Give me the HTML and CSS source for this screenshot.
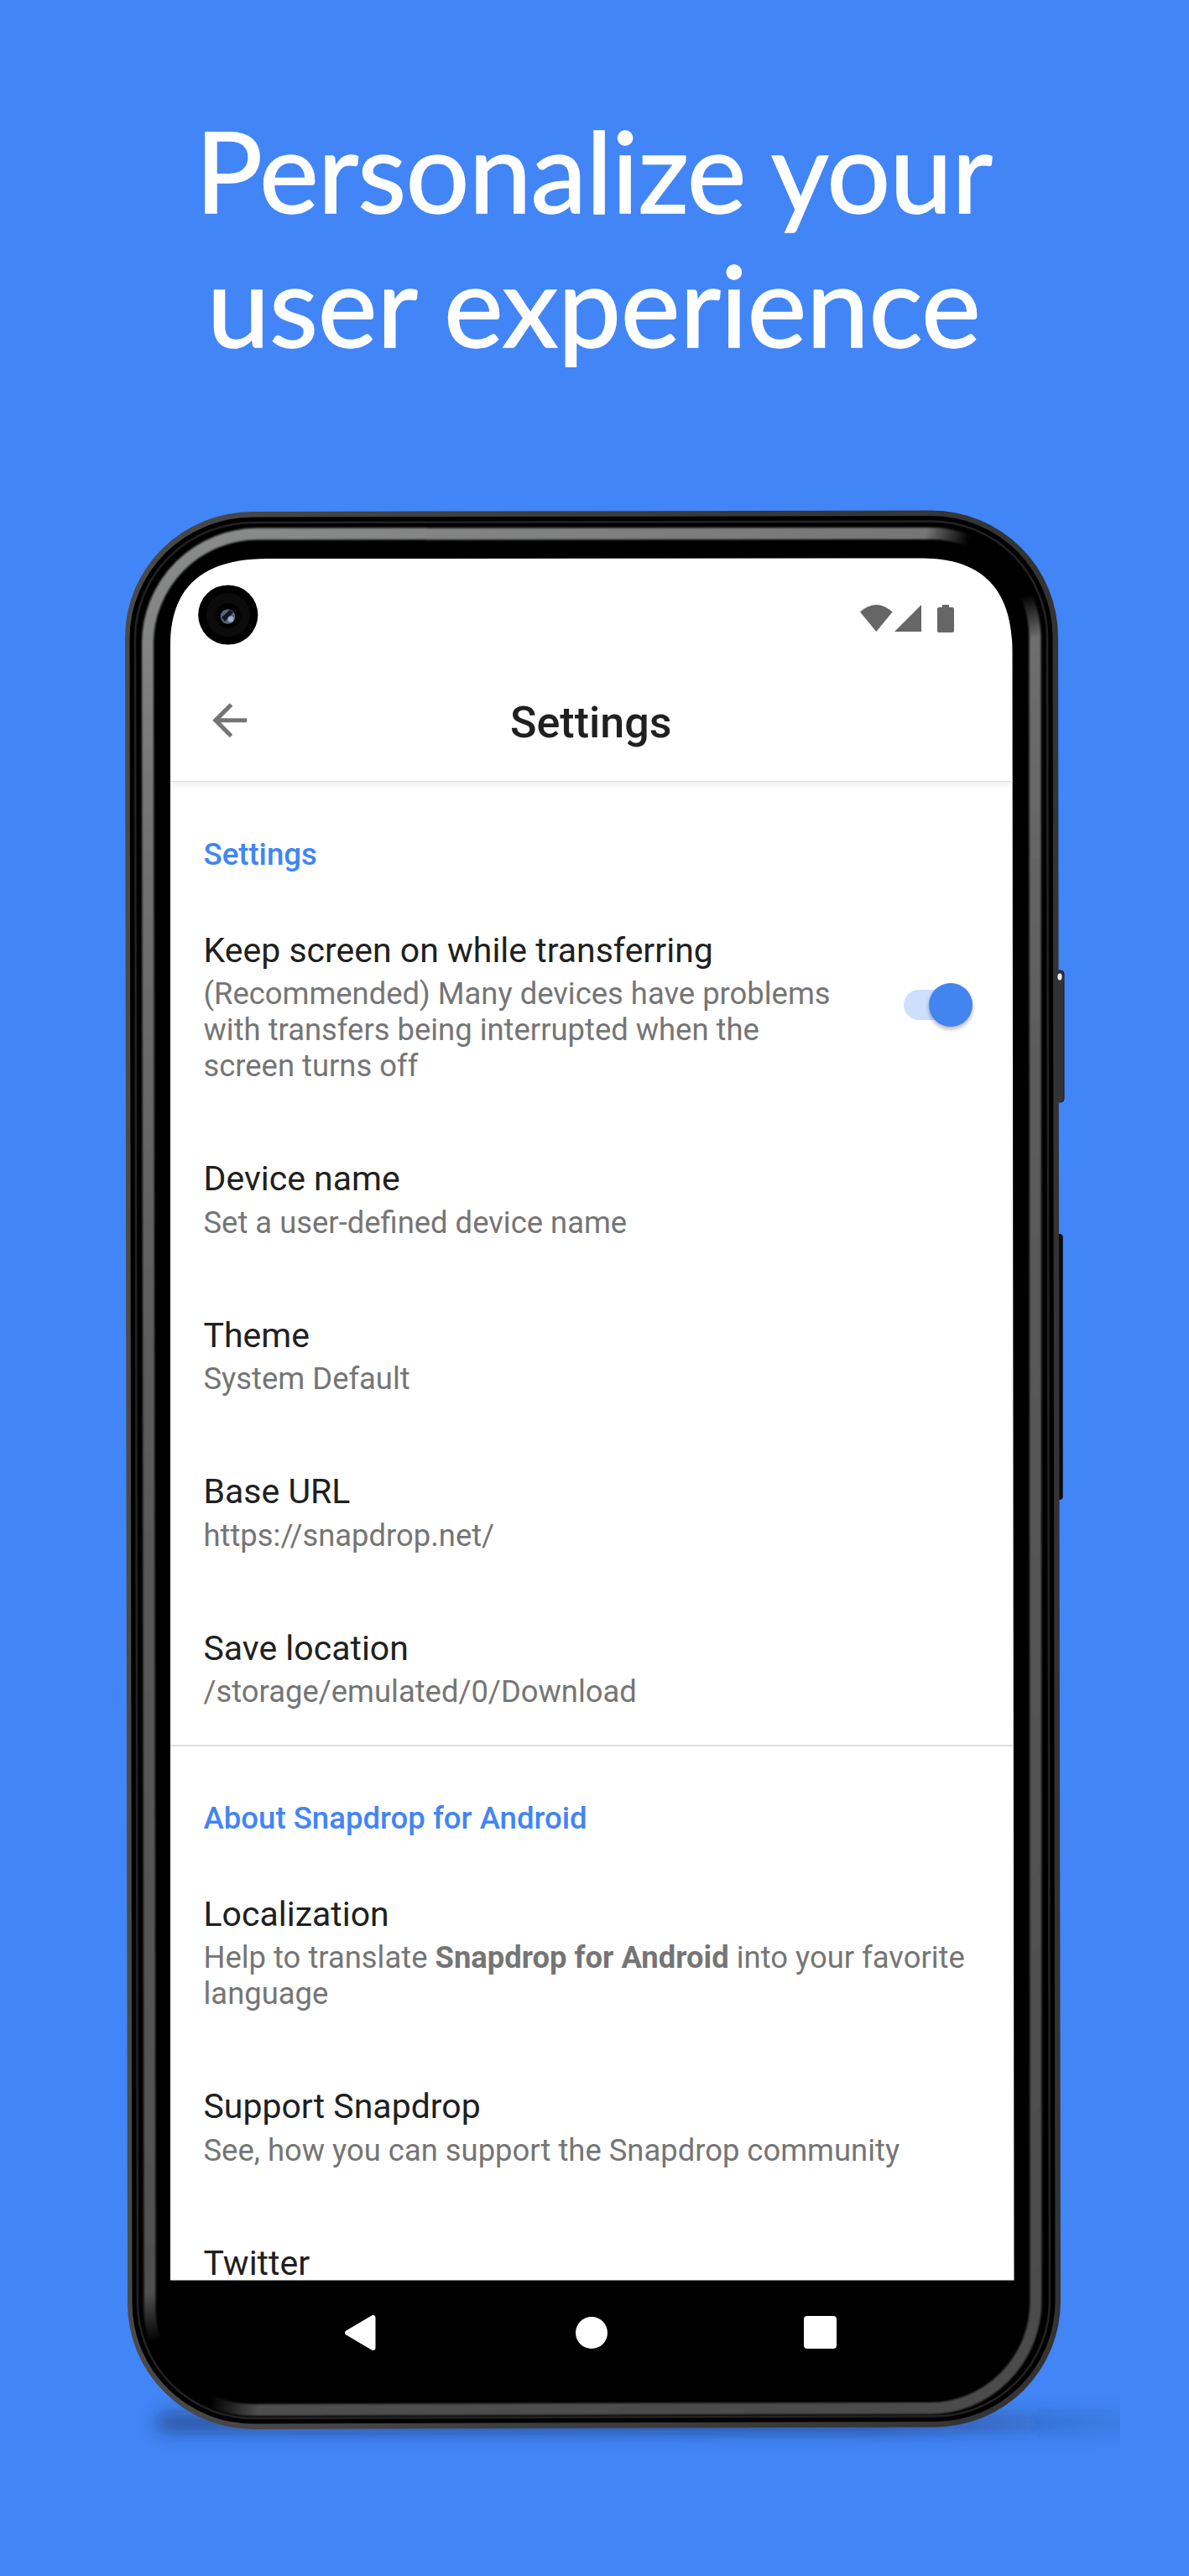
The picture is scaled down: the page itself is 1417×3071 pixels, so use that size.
FILE: index.html
```html
<!DOCTYPE html>
<html lang="en">
<head>
<meta charset="utf-8">
<title>Personalize your user experience</title>
<link rel="stylesheet" href="styles.css">
</head>
<body>
<main class="poster">
  <h1 class="headline"><span class="line-1">Personalize your</span><span class="line-2">user experience</span></h1>

  <svg class="device" width="1417" height="3071" viewBox="0 0 1417 3071" aria-hidden="true">
    <defs>
      <filter id="soft" x="-20%" y="-200%" width="140%" height="500%"><feGaussianBlur stdDeviation="10"/></filter>
      <filter id="edge" x="-5%" y="-5%" width="110%" height="110%"><feGaussianBlur stdDeviation="1"/></filter>
      <clipPath id="floor"><rect x="0" y="2800" width="1335" height="200"/></clipPath>
      <linearGradient id="shade" gradientUnits="userSpaceOnUse" x1="180" y1="0" x2="1400" y2="0">
        <stop offset="0" stop-color="#152a52" stop-opacity=".5"/>
        <stop offset=".7" stop-color="#152a52" stop-opacity=".6"/>
        <stop offset=".88" stop-color="#152a52" stop-opacity=".22"/>
        <stop offset="1" stop-color="#152a52" stop-opacity=".05"/>
      </linearGradient>
      <linearGradient id="rim" gradientUnits="userSpaceOnUse" x1="149" y1="0" x2="1264" y2="0">
        <stop offset="0" stop-color="#4a4a4a"/><stop offset=".5" stop-color="#3c3c3c"/><stop offset="1" stop-color="#333"/>
      </linearGradient>
      <linearGradient id="glow" gradientUnits="userSpaceOnUse" x1="149" y1="610" x2="900" y2="2890">
        <stop offset="0" stop-color="#8e908f"/><stop offset=".15" stop-color="#737373"/><stop offset=".4" stop-color="#5c5c5c"/><stop offset="1" stop-color="#4c4c4c"/>
      </linearGradient>
      <radialGradient id="fade">
        <stop offset="0" stop-color="#000"/><stop offset=".5" stop-color="#000"/><stop offset="1" stop-color="#000" stop-opacity="0"/>
      </radialGradient>
      <mask id="shine" maskUnits="userSpaceOnUse" x="0" y="0" width="1417" height="3071">
        <rect width="1417" height="3071" fill="#fff"/>
        <circle cx="1205" cy="660" r="105" fill="url(#fade)"/>
        <circle cx="195" cy="2848" r="115" fill="url(#fade)"/>
      </mask>
    </defs>
    <g clip-path="url(#floor)"><rect x="186" y="2876" width="1300" height="24" rx="12" fill="url(#shade)" filter="url(#soft)"/></g>
    <rect x="1256" y="1157" width="12" height="157" rx="4" fill="#333" stroke="#1a1a1a"/>
    <rect x="1256" y="1471" width="10.700" height="317" rx="4" fill="#0a0a0a"/>
    <path d="M149 760A152 150 0 0 1 301 610L1110 608.500A151 151 0 0 1 1261 759.500L1264 2743A150 150 0 0 1 1114 2893.500L302 2896A150 150 0 0 1 152 2746Z" fill="url(#rim)"/>
    <path d="M154.500 761A147.500 144.500 0 0 1 302 616.500L1110 615A144.500 144.500 0 0 1 1254.500 759.500L1257.500 2743A143.500 143.500 0 0 1 1114 2887L302 2889.500A144 144 0 0 1 157.500 2746Z" fill="#000"/>
    <path d="M161 761A141 138 0 0 1 302 623L1110 621.500A138 138 0 0 1 1248 759.500L1251 2743A137 137 0 0 1 1114 2880.500L302 2883A138 138 0 0 1 164 2746Z" fill="none" stroke="#222" stroke-width="2.500"/>
    <path mask="url(#shine)" filter="url(#edge)" d="M176 767A131 131 0 0 1 307 636.500L1110 636A124 124 0 0 1 1233.500 760L1234.500 2743A126 128 0 0 1 1108 2871L302 2873A122 122 0 0 1 178.500 2746Z" fill="none" stroke="url(#glow)" stroke-width="14"/>
    <path d="M203 2718.500V767C204 698 243 666 320 666L1100 665.500C1172 666 1206 704 1206.500 775L1208.500 2718.500Z" fill="#fff"/>
    <ellipse cx="1263" cy="1164.500" rx="2.600" ry="4" fill="#eee"/>
    <circle cx="271.800" cy="733" r="35.600" fill="#000"/>
    <circle cx="271.800" cy="733" r="26" fill="#0b0b0b"/>
    <circle cx="271.800" cy="734" r="15" fill="#000"/>
    <circle cx="271.500" cy="735" r="8.800" fill="#56657c"/>
    <path d="M264 736L274 727L278 730L268 741Z" fill="#111722"/>
    <circle cx="275" cy="738" r="3.500" fill="#9db0d0"/>
  </svg>

  <section class="screen">
    <div class="status">
      <svg width="39" height="33" viewBox="0 0 39 33"><path d="M0 8.500Q19.300 -8.500 38.600 8.500L19.300 32Z"/></svg>
      <svg class="signal" width="32" height="33" viewBox="0 0 32 33"><path d="M32 0V32H0Z"/></svg>
      <svg class="battery" width="20" height="33" viewBox="0 0 20 33"><path d="M6 0H14V3H18Q20 3 20 5V31Q20 33 18 33H2Q0 33 0 31V5Q0 3 2 3H6Z"/></svg>
    </div>
    <header class="appbar">
      <svg class="back" viewBox="0 0 24 24"><path d="M20 11H7.830l5.590-5.590L12 4l-8 8 8 8 1.410-1.410L7.830 13H20v-2z"/></svg>
      <h2 class="appbar-title">Settings</h2>
    </header>
    <div class="list">
      <h3 class="category">Settings</h3>
      <div class="item item-switch">
        <div class="item-text">
          <div class="title">Keep screen on while transferring</div>
          <div class="summary">(Recommended) Many devices have problems<br>with transfers being interrupted when the<br>screen turns off</div>
        </div>
        <span class="switch"><span class="thumb"></span></span>
      </div>
      <div class="item"><div class="title">Device name</div><div class="summary">Set a user-defined device name</div></div>
      <div class="item"><div class="title">Theme</div><div class="summary">System Default</div></div>
      <div class="item"><div class="title">Base URL</div><div class="summary">https://snapdrop.net/</div></div>
      <div class="item"><div class="title">Save location</div><div class="summary">/storage/emulated/0/Download</div></div>
      <h3 class="category category-ruled">About Snapdrop for Android</h3>
      <div class="item"><div class="title">Localization</div><div class="summary">Help to translate <b>Snapdrop for Android</b> into your favorite<br>language</div></div>
      <div class="item"><div class="title">Support Snapdrop</div><div class="summary">See, how you can support the Snapdrop community</div></div>
      <div class="item"><div class="title">Twitter</div></div>
    </div>
  </section>

  <nav class="navbar">
    <svg width="37" height="42" viewBox="0 0 37 42"><path d="M3 21L33.500 3V39Z" fill="#fff" stroke="#fff" stroke-width="6" stroke-linejoin="round"/></svg>
    <span class="home"></span>
    <span class="recent"></span>
  </nav>
</main>
</body>
</html>
```
FILE: styles.css
```css
* { box-sizing: border-box; }

body {
  margin: 0;
  background: #4285f6;
  font-family: Roboto, "Liberation Sans", sans-serif;
}

.poster {
  position: relative;
  width: 1417px;
  height: 3071px;
  overflow: hidden;
}

.headline {
  display: flex;
  flex-direction: column;
  align-items: center;
  height: 666px;
  margin: 0;
  padding: 122.5px 2px 0 0;
  color: #fff;
  font: 400 134px/160px Lato, sans-serif;
  -webkit-text-stroke: 1.5px #fff;
  white-space: nowrap;
}
.line-1 { letter-spacing: -.85px; }
.line-2 { letter-spacing: -.3px; }

.device {
  position: absolute;
  inset: 0;
}

.screen {
  position: relative;
  display: flex;
  flex-direction: column;
  width: 1004px;
  height: 2052.5px;
  margin-left: 203px;
  overflow: hidden;
}

.status {
  display: flex;
  flex: none;
  align-items: flex-start;
  height: 145px;
  padding: 55px 0 0 821.5px;
  fill: #666;
}
.status svg { flex: none; }
.signal { margin-left: 2.5px; }
.battery { margin-left: 19px; }

.appbar {
  display: flex;
  flex: none;
  align-items: flex-start;
  height: 121px;
  padding: 0 40px;
  border-bottom: 1px solid #dedede;
  box-shadow: 0 3px 8px rgba(0, 0, 0, .08);
  clip-path: inset(0 0 -16px 0);
}
.back {
  width: 61.5px;
  height: 61.5px;
  margin-top: 17px;
  fill: #757575;
}
.appbar-title {
  flex: 1;
  margin: 20.5px 63px 0 0;
  color: #202020;
  font-size: 52px;
  font-weight: 500;
  line-height: 60px;
  text-align: center;
}

.list {
  display: flex;
  flex: none;
  flex-direction: column;
  padding-top: 62px;
}

.category {
  flex: none;
  height: 111.8px;
  margin: 0;
  padding-left: 39.5px;
  color: #4285f4;
  font-size: 36.6px;
  font-weight: 500;
  line-height: 50px;
}
.category-ruled {
  height: 174.3px;
  margin-top: -44px;
  padding-top: 60.5px;
  border-top: 2px solid #dedede;
}

.item {
  flex: none;
  padding: 0 0 86px 39.5px;
}
.title {
  height: 57.5px;
  color: #202020;
  font-size: 41px;
  line-height: 54px;
}
.summary {
  color: #757575;
  font-size: 36.4px;
  line-height: 43px;
  white-space: nowrap;
}

.item-switch {
  display: flex;
  justify-content: space-between;
}
.switch {
  width: 74px;
  height: 36px;
  margin: 74px 56.5px 0 0;
  padding-left: 30px;
  border-radius: 18px;
  background: #cddffc;
}
.thumb {
  display: block;
  width: 52px;
  height: 52px;
  margin-top: -8px;
  border-radius: 50%;
  background: #4285f0;
  box-shadow: 0 3px 5px rgba(0, 0, 0, .3);
}

.navbar {
  position: relative;
  display: flex;
  align-items: center;
  height: 124px;
  padding-left: 410.5px;
}
.home {
  width: 38px;
  height: 38px;
  margin-left: 238px;
  border-radius: 50%;
  background: #fff;
}
.recent {
  width: 39px;
  height: 39px;
  margin-left: 234.5px;
  border-radius: 4px;
  background: #fff;
}
```
